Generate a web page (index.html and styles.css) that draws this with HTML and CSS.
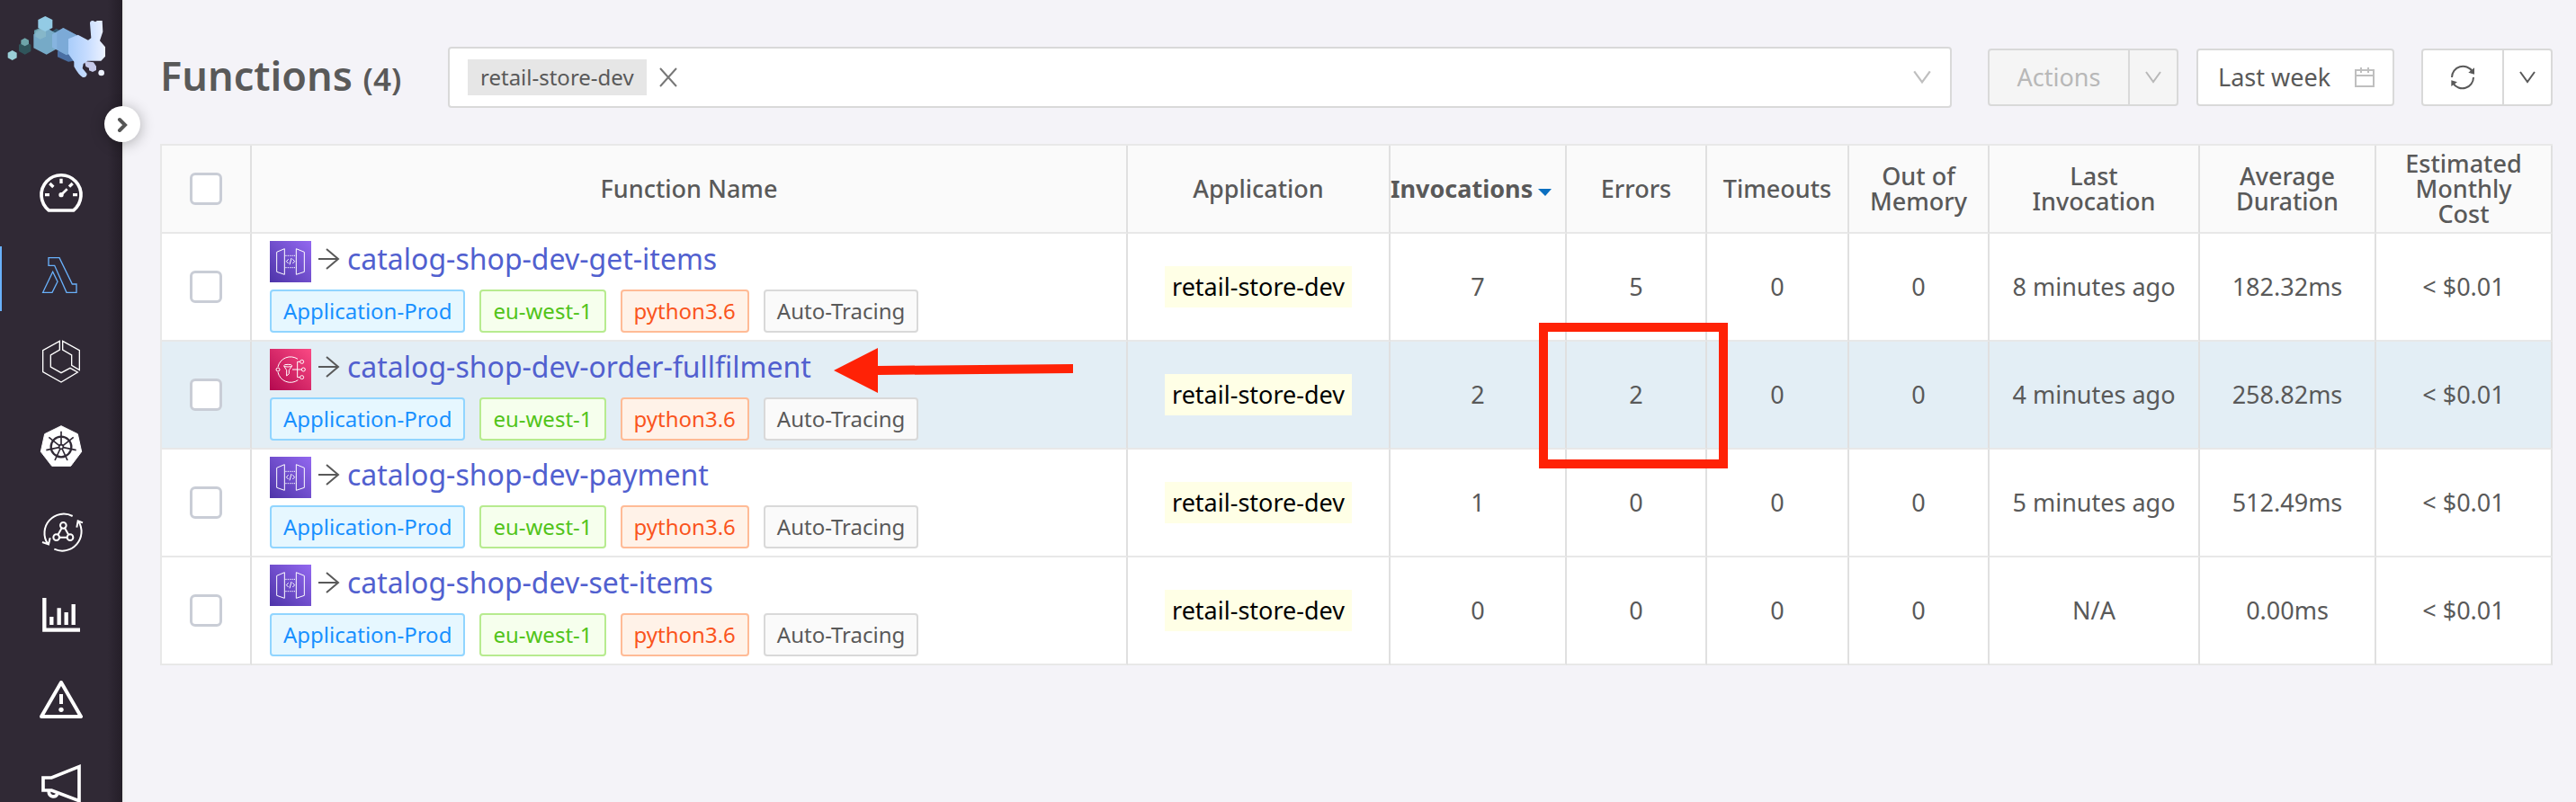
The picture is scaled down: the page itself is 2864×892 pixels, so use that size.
FILE: index.html
```html
<!DOCTYPE html>
<html lang="en">
<head>
<meta charset="utf-8">
<title>Functions</title>
<link rel="stylesheet" href="styles.css">
</head>
<body>
<svg class="defs" width="0" height="0" aria-hidden="true">
  <defs>
    <linearGradient id="gw" x1="0" y1="1" x2="1" y2="0"><stop offset="0" stop-color="#4d34a8"/><stop offset="1" stop-color="#9368f0"/></linearGradient>
    <linearGradient id="sn" x1="0" y1="1" x2="1" y2="0"><stop offset="0" stop-color="#b3094f"/><stop offset="1" stop-color="#fb4a84"/></linearGradient>
    <linearGradient id="rabbit" x1="0" y1="0" x2="1" y2="0"><stop offset="0" stop-color="#a9cdfa"/><stop offset=".5" stop-color="#c6dcff"/><stop offset="1" stop-color="#edf2ff"/></linearGradient>
  </defs>
  <symbol id="i-gateway" viewBox="30 39 138 138">
    <rect x="30" y="39" width="138" height="138" fill="url(#gw)"/>
    <g fill="none" stroke="#fff" stroke-width="3">
      <path d="M79 65 L53 76 V142 L79 151 Z M118 65 L145 76 V142 L118 151 Z"/>
      <path d="M82 88 H118 M82 128 H118" stroke-dasharray="4 3"/>
      <path d="M92 100 L85 107 L92 114 M106 100 L113 107 L106 114 M102 96 L96 118"/>
    </g>
  </symbol>
  <symbol id="i-topic" viewBox="30 39 138 138">
    <rect x="30" y="39" width="138" height="138" fill="url(#sn)"/>
    <g fill="none" stroke="#fff" stroke-width="3">
      <path d="M57 99 A43 43 0 0 1 123 73 M57 117 A43 43 0 0 0 124 143"/>
      <circle cx="57" cy="108" r="6"/><circle cx="137" cy="82" r="6"/><circle cx="142" cy="108" r="6"/><circle cx="137" cy="134" r="6"/>
      <path d="M131 82 H122 V134 H131 M105 108 H136"/>
      <path d="M77 96 L86 110 V129 L94 122 V110 L104 96"/><ellipse cx="90.500" cy="95" rx="13.500" ry="4"/>
    </g>
  </symbol>
  <symbol id="i-arrow" viewBox="0 0 24 24"><path d="M0 12 H22 M9 1 L22 12 L9 23" fill="none" stroke="currentColor" stroke-width="2"/></symbol>
  <symbol id="i-down" viewBox="0 0 20 20"><path d="M2 4 L10 15 L18 4" fill="none" stroke="currentColor" stroke-width="2"/></symbol>
</svg>
<div class="app">
  <aside class="side">
    <a class="logo" href="#" aria-label="Home">
      <svg width="136" height="90" viewBox="0 0 408 270">
        <path d="M41 168 L56 176 V193 L41 201 L26 193 V176 Z" fill="#9ad0d8"/>
        <path d="M83 138 L103 149 V171 L83 182 L63 171 V149 Z" fill="#30555b"/>
        <path d="M83 127 L96 134 V147 L83 154 L70 147 V134 Z" fill="#6ea5a9"/>
        <path d="M188 95 L210 107 V140 L188 150 L170 140 V107 Z" fill="#31586f"/>
        <path d="M192 170 L240 160 L262 200 L228 206 L192 190 Z" fill="#4a6fa3"/>
        <path d="M134 92 L152 101 V122 L134 131 L114 122 V101 Z" fill="#6096a3"/>
        <path d="M151 91 L191 113 V162 L155 182 L112 160 V115 Z" fill="#76aac7"/>
        <path d="M134 95 L153 104 V122 L134 131 L118 122 V104 Z" fill="#8dbccb" opacity=".7"/>
        <path d="M151 54 L175 66 V93 L151 105 L127 93 V66 Z" fill="#93cbe5"/>
        <path d="M211 93 L256 117 V165 L222 184 L174 158 V115 Z" fill="#86b4df"/>
        <path d="M211 93 L256 117 V165 L222 184 L190 166 V105 Z" fill="#719fcf" opacity=".5"/>
        <path d="M282 204 L312 208 L321 221 V234 L309 240 L297 235 V227 L286 222 Z" fill="#c5c9e9"/>
        <path d="M228 130 L260 116 L294 134 L304 127 L300 77 Q301 68 310 69 L318 73 L324 69 H341 L343 106 L333 136 L351 157 V188 L337 203 H292 L278 213 L275 228 L290 246 Q289 260 276 258 Q262 250 247 222 V206 L228 180 Z" fill="url(#rabbit)"/>
        <circle cx="338" cy="243" r="10" fill="#edf2ff"/>
      </svg>
    </a>
    <nav class="nav">
      <a class="item" href="#" aria-label="Dashboard"><svg viewBox="132 576 144 144" fill="none" stroke="#fff">
        <path d="M163 702 A66 66 0 1 1 245 702 Z" stroke-width="11" stroke-linejoin="round"/>
        <path d="M204 596 V612 M150 650 H165 M243 650 H258 M166 612 L178 624 M242 612 L231 623" stroke-width="10"/>
        <path d="M204 650 L224 631" stroke-width="8"/><circle cx="204" cy="650" r="8" fill="#fff" stroke="none"/></svg></a>
      <a class="item active" href="#" aria-label="Functions"><svg viewBox="132 858 144 144" fill="none" stroke="#69b1fb" stroke-width="4">
        <path d="M162 860 H198 L241 948 H255 V976 H222 L182 886 H162 Z M176 907 L192 940 L174 976 H143 Z"/></svg></a>
      <a class="item" href="#" aria-label="Containers"><svg viewBox="132 1140 144 144" fill="none" stroke="#fff" stroke-width="4">
        <path d="M199 1138 L143 1169 V1241 L204 1275 L259 1242 L234 1228 L204 1244 L169 1224 V1185 L199 1167 Z M209 1138 L265 1169 V1235 L239 1219 V1185 L209 1167 Z"/></svg></a>
      <a class="item" href="#" aria-label="Kubernetes"><svg viewBox="132 102 144 144">
        <path d="M204 101 L259 128 L272 187 L236 235 H173 L136 187 L149 128 Z" fill="#fff" stroke="#fff" stroke-width="3" stroke-linejoin="round"/>
        <g fill="none" stroke="#302935" stroke-width="5"><circle cx="204" cy="171" r="34" stroke-width="7"/><circle cx="204" cy="171" r="7"/>
        <path d="M204 164 V119 M210 167 L245 139 M211 173 L254 182 M207 177 L225 216 M201 177 L183 216 M197 173 L154 182 M198 167 L163 139"/></g></svg></a>
      <a class="item" href="#" aria-label="Transactions"><svg viewBox="132 384 144 144" fill="none" stroke="#fff" stroke-width="6">
        <path d="M242 402 A64 64 0 0 0 159 494 M141 489 L162 496 L167 475 M181 512 A64 64 0 0 0 262 420 M256 440 L260 418 L276 424"/>
        <circle cx="211" cy="433" r="10"/><circle cx="188" cy="473" r="10"/><circle cx="234" cy="473" r="10"/>
        <path d="M206 442 L193 465 M216 442 L229 465 M198 473 H224"/></svg></a>
      <a class="item" href="#" aria-label="Metrics"><svg viewBox="132 666 144 144" fill="none" stroke="#fff" stroke-width="13">
        <path d="M148 675 V782 H267 M172 738 V765 M197 709 V765 M221 723 V765 M245 696 V765"/></svg></a>
      <a class="item" href="#" aria-label="Issues"><svg viewBox="132 948 144 144" fill="none" stroke="#fff" stroke-width="12">
        <path d="M204 957 L270 1071 H138 Z" stroke-linejoin="round"/><path d="M204 996 V1029"/><circle cx="204" cy="1048" r="8" fill="#fff" stroke="none"/></svg></a>
      <a class="item" href="#" aria-label="Alerts"><svg viewBox="132 1230 144 144" fill="none" stroke="#fff" stroke-width="11">
        <path d="M144 1275 H172 L264 1238 V1352 L172 1317 H144 Z M163 1322 A15 15 0 0 0 191 1330"/></svg></a>
    </nav>
    <button class="toggle" aria-label="Expand menu"><svg width="12" height="18" viewBox="0 0 12 18"><path d="M3 4 L9 10 L3 16" fill="none" stroke="#555" stroke-width="4" stroke-linecap="round"/></svg></button>
  </aside>
  <main class="main">
    <header class="bar">
      <h1 class="title">Functions <small>(4)</small></h1>
      <div class="search">
        <span class="chip">retail-store-dev</span>
        <button class="clear" aria-label="Remove"><svg width="20" height="22" viewBox="0 0 20 22"><path d="M1 1 L19 21 M19 1 L1 21" stroke="#777" stroke-width="2"/></svg></button>
        <input class="query" type="text" aria-label="Filter by application">
        <svg class="down light" width="22" height="22"><use href="#i-down"/></svg>
      </div>
      <div class="group disabled">
        <button class="btn wide" disabled>Actions</button>
        <button class="btn arrow" disabled aria-label="More actions"><svg width="20" height="20"><use href="#i-down"/></svg></button>
      </div>
      <button class="range">Last week
        <svg width="22" height="22" viewBox="0 0 22 22" fill="none" stroke="#bfbfbf" stroke-width="2"><path d="M1 3 H21 V21 H1 Z M1 9 H21 M7 0 V6 M15 0 V6"/></svg>
      </button>
      <div class="group">
        <button class="btn refresh" aria-label="Refresh"><svg width="28" height="28" viewBox="1002 96 84 84" fill="none" stroke="#595959" stroke-width="6"><path d="M1008 138 A37 37 0 0 1 1076 118 M1080 138 A37 37 0 0 1 1012 158"/><path d="M1083 106 V128 L1063 122 Z M1006 148 L1026 154 L1006 168 Z" fill="#595959" stroke="none"/></svg></button>
        <button class="btn arrow" aria-label="Refresh options"><svg width="20" height="20"><use href="#i-down"/></svg></button>
      </div>
    </header>
    <table class="grid">
      <colgroup><col class="c-check"><col><col class="c-app"><col class="c-md"><col class="c-sm"><col class="c-out"><col class="c-sm"><col class="c-last"><col class="c-md"><col class="c-md"></colgroup>
      <thead>
        <tr><th><input class="check" type="checkbox" aria-label="Select all"></th><th>Function Name</th><th>Application</th><th class="sorted"><span class="sort">Invocations<svg width="16" height="10" viewBox="0 0 16 10"><path d="M0 0 H15 L8 8 Z" fill="#0b6fc0"/></svg></span></th><th>Errors</th><th>Timeouts</th><th>Out of<br>Memory</th><th>Last<br>Invocation</th><th>Average<br>Duration</th><th>Estimated<br>Monthly<br>Cost</th></tr>
      </thead>
      <tbody>
        <tr>
          <td><input class="check" type="checkbox" aria-label="Select catalog-shop-dev-get-items"></td>
          <td class="name"><div class="fn"><svg class="svc"><use href="#i-gateway"/></svg><svg class="to"><use href="#i-arrow"/></svg><a href="#">catalog-shop-dev-get-items</a></div>
            <div class="tags"><span class="tag blue">Application-Prod</span><span class="tag green">eu-west-1</span><span class="tag orange">python3.6</span><span class="tag">Auto-Tracing</span></div></td>
          <td><mark>retail-store-dev</mark></td><td>7</td><td>5</td><td>0</td><td>0</td><td>8 minutes ago</td><td>182.32ms</td><td>&lt; $0.01</td>
        </tr>
        <tr class="hover">
          <td><input class="check" type="checkbox" aria-label="Select catalog-shop-dev-order-fullfilment"></td>
          <td class="name"><div class="fn"><svg class="svc"><use href="#i-topic"/></svg><svg class="to"><use href="#i-arrow"/></svg><a href="#">catalog-shop-dev-order-fullfilment</a></div>
            <div class="tags"><span class="tag blue">Application-Prod</span><span class="tag green">eu-west-1</span><span class="tag orange">python3.6</span><span class="tag">Auto-Tracing</span></div>
            <svg class="pointer" viewBox="0 0 266 50"><path d="M0 25 L49 0 V20 L266 18 V28 L49 30 V50 Z" fill="#ff2206"/></svg></td>
          <td><mark>retail-store-dev</mark></td><td>2</td><td class="marked">2<span class="frame"></span></td><td>0</td><td>0</td><td>4 minutes ago</td><td>258.82ms</td><td>&lt; $0.01</td>
        </tr>
        <tr>
          <td><input class="check" type="checkbox" aria-label="Select catalog-shop-dev-payment"></td>
          <td class="name"><div class="fn"><svg class="svc"><use href="#i-gateway"/></svg><svg class="to"><use href="#i-arrow"/></svg><a href="#">catalog-shop-dev-payment</a></div>
            <div class="tags"><span class="tag blue">Application-Prod</span><span class="tag green">eu-west-1</span><span class="tag orange">python3.6</span><span class="tag">Auto-Tracing</span></div></td>
          <td><mark>retail-store-dev</mark></td><td>1</td><td>0</td><td>0</td><td>0</td><td>5 minutes ago</td><td>512.49ms</td><td>&lt; $0.01</td>
        </tr>
        <tr>
          <td><input class="check" type="checkbox" aria-label="Select catalog-shop-dev-set-items"></td>
          <td class="name"><div class="fn"><svg class="svc"><use href="#i-gateway"/></svg><svg class="to"><use href="#i-arrow"/></svg><a href="#">catalog-shop-dev-set-items</a></div>
            <div class="tags"><span class="tag blue">Application-Prod</span><span class="tag green">eu-west-1</span><span class="tag orange">python3.6</span><span class="tag">Auto-Tracing</span></div></td>
          <td><mark>retail-store-dev</mark></td><td>0</td><td>0</td><td>0</td><td>0</td><td>N/A</td><td>0.00ms</td><td>&lt; $0.01</td>
        </tr>
      </tbody>
    </table>
  </main>
</div>
</body>
</html>
```
FILE: styles.css
```css
* { box-sizing: border-box; }
body { margin: 0; background: #f4f3f8; color: #595959; font: 27px/38px "Noto Sans", "Open Sans", sans-serif; }
button, input { font: inherit; color: inherit; }
button { padding: 0; border: 0; background: none; }
.defs { position: absolute; }
.app { display: flex; height: 100vh; }

/* sidebar */
.side { position: relative; flex: none; display: flex; flex-direction: column; width: 136px; background: linear-gradient(90deg, #302935 88%, #241e28); box-shadow: 2px 0 2px #ebebeb; }
.logo { display: block; height: 180px; }
.logo svg { display: block; }
.nav { display: flex; flex-direction: column; gap: 22px; flex: 1; min-height: 0; overflow: hidden; }
.item { display: flex; flex: none; align-items: center; justify-content: center; height: 72px; }
.item.active { background: linear-gradient(#69b1fb, #69b1fb) left / 2px 100% no-repeat; }
.item svg { width: 48px; height: 48px; overflow: visible; }
.toggle { position: absolute; top: 118px; right: -20px; display: flex; align-items: center; justify-content: center; width: 40px; height: 40px; border-radius: 50%; background: #fff; box-shadow: 0 2px 16px rgba(0, 0, 0, .3); }

/* toolbar */
.main { flex: 1; min-width: 0; padding: 52px 26px 0 42px; }
.bar { display: flex; align-items: center; margin-bottom: 40px; }
.title { width: 320px; margin: 0; font-size: 45px; line-height: 60px; font-weight: 600; white-space: nowrap; }
.title small { font-size: 35px; }
.search { flex: 1; display: flex; align-items: center; height: 68px; margin-right: 40px; padding: 0 20px; border: 2px solid #d9d9d9; border-radius: 4px; background: #fff; }
.chip { padding: 0 14px; background: #e6e6e6; font-size: 24px; line-height: 40px; }
.clear { display: flex; margin-left: 14px; }
.query { flex: 1; min-width: 0; border: 0; outline: 0; background: none; }
.light { color: #bfbfbf; }
.group { display: flex; height: 64px; border: 2px solid #d9d9d9; border-radius: 4px; background: #fff; }
.group.disabled { margin-right: 20px; background: #f5f5f5; color: #b8b8b8; }
.btn { display: flex; align-items: center; justify-content: center; }
.btn + .btn { border-left: 2px solid #d9d9d9; }
.wide { width: 154px; }
.refresh { width: 88px; }
.arrow { width: 54px; }
.range { display: flex; align-items: center; justify-content: space-between; width: 220px; height: 64px; margin-right: 30px; padding: 0 20px 0 22px; border: 2px solid #d9d9d9; border-radius: 4px; background: #fff; }

/* table */
.grid { width: 100%; table-layout: fixed; border: solid #e8e8e8; border-width: 2px 0 0 2px; border-spacing: 0; background: #fff; text-align: center; }
.c-check { width: 100px; }
.c-app { width: 292px; }
.c-md { width: 196px; }
.c-sm { width: 156px; }
.c-out { width: 158px; }
.c-last { width: 234px; }
th, td { padding: 0; border: solid #e0e0e0; border-width: 0 2px 2px 0; border-bottom-color: #e8e8e8; vertical-align: middle; }
th { height: 98px; background: #fafafa; font-weight: 500; line-height: 28px; }
td { height: 120px; }
.sorted { font-weight: 700; text-align: left; }
.sort { display: inline-flex; align-items: baseline; gap: 6px; }
.check { appearance: none; display: block; width: 36px; height: 36px; margin: 0 auto; border: 3px solid #c9cdd6; border-radius: 6px; background: #fff; }
.name { position: relative; padding: 8px 20px; text-align: left; }
.fn { display: flex; align-items: center; height: 46px; margin-bottom: 8px; }
.fn a { color: #5160cf; font-size: 32px; line-height: 40px; text-decoration: none; margin-bottom: 6px; }
.svc { width: 46px; height: 46px; }
.to { width: 24px; height: 24px; margin: 0 8px 6px; }
.tags { display: flex; gap: 16px; }
.tag { height: 48px; padding: 0 13px; border: 2px solid #d9d9d9; border-radius: 4px; background: #fafafa; font-size: 24px; line-height: 44px; }
.blue { border-color: #91d5ff; background: #e6f7ff; color: #1890ff; }
.green { border-color: #b7eb8f; background: #f6ffed; color: #52c41a; }
.orange { border-color: #ffbb96; background: #fff2e8; color: #fa541c; }
mark { display: inline-block; padding: 0 8px; background: #ffffe6; color: #000; line-height: 46px; }
.hover td { background: #e3eef5; }

/* annotations */
.pointer { position: absolute; left: 647px; top: 7px; width: 266px; height: 50px; }
.marked { position: relative; }
.frame { position: absolute; z-index: 1; left: -31px; top: -21px; width: 210px; height: 162px; border: 10px solid #ff2206; }
```
